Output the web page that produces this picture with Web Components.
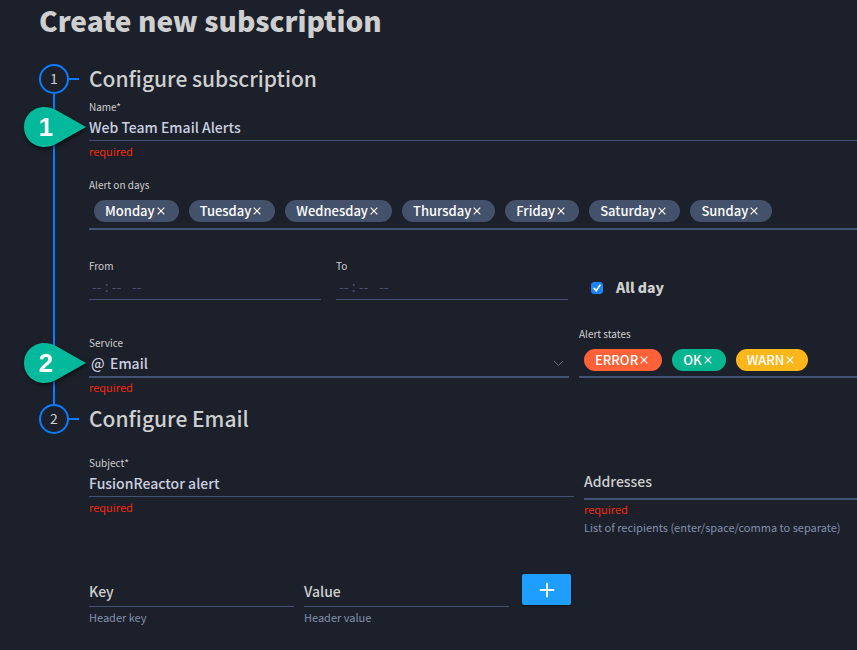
<!DOCTYPE html>
<html lang="en">
<head>
<meta charset="utf-8">
<meta name="viewport" content="width=device-width, initial-scale=1">
<title>Create new subscription</title>
<style>
body {
  margin: 0;
  background: #1c202a;
  color: #cfcfcf;
  font-family: "Noto Sans CJK SC", "Noto Sans", sans-serif;
}
</style>
</head>
<body>
<subscription-page></subscription-page>

<script>
const define = (name, html, setup) => {
  const template = document.createElement('template');
  template.innerHTML = html;
  customElements.define(name, class extends HTMLElement {
    connectedCallback() {
      if (this.shadowRoot) return;
      const root = this.attachShadow({ mode: 'open' });
      root.append(template.content.cloneNode(true));
      if (setup) setup(this, root);
    }
  });
};

/* Numbered pin that points at a field */
define('callout-pin', `
<style>
  :host { position: absolute; left: -69px; top: 5px; display: block; filter: drop-shadow(1px 2px 2px rgba(0,0,0,.6)); }
  svg { display: block; width: 70px; height: 48px; }
  text { font: bold 26px "Liberation Sans", Arial, sans-serif; fill: #fff; text-anchor: middle; }
</style>
<svg viewBox="0 0 70 48" role="img">
  <path fill="#02b99c" d="M24 4C12.900 4 4 13 4 24S12.900 44 24 44C28.500 44 32.500 42.800 36 41L66 24L36 7C32.500 5.200 28.500 4 24 4Z"/>
  <text x="26" y="33"></text>
</svg>`, (host, root) => {
  root.querySelector('text').textContent = host.getAttribute('number');
});

/* Step with number, rail and content */
define('wizard-step', `
<style>
  :host { display: grid; grid-template-columns: 30px 10px 1fr; }
  .num { box-sizing: border-box; width: 30px; height: 30px; border: 2px solid #0a7cff; border-radius: 50%;
         font-size: 14px; line-height: 24px; text-align: center; }
  .dash { align-self: center; height: 2px; background: #0a7cff; }
  h2 { margin: 0; padding-left: 10px; font-size: 21px; line-height: 28px; font-weight: 500; }
  .rail { justify-self: center; width: 2px; }
  :host([linked]) .rail { background: #0a7cff; }
  .body { grid-column: 3; padding-left: 10px; min-width: 0; }
</style>
<div class="num"></div><div class="dash"></div><h2></h2>
<div class="rail"></div><div class="body"><slot></slot></div>`, (host, root) => {
  root.querySelector('.num').textContent = host.getAttribute('number');
  root.querySelector('h2').textContent = host.getAttribute('heading');
});

const fieldStyle = `
  :host { display: block; position: relative; min-width: 0; }
  label, .label { display: block; font-size: 10px; line-height: 18px; font-weight: 400; }
  .control { display: grid; align-items: center; box-sizing: content-box; height: calc(var(--control, 24px) - 2px);
             padding-bottom: 2px; border-bottom: var(--rule, 1px) solid #435373; }
  .control > * { grid-area: 1 / 1; min-width: 0; }
  input, select { box-sizing: border-box; width: 100%; height: 22px; margin: 0; padding: 0; border: 0; outline: 0; background: none;
          color: #cbd0e0; font: 500 14px/22px "Noto Sans CJK SC", sans-serif; appearance: none; }
  .control label { font-size: 14px; line-height: 22px; font-weight: 500; }
  .hint { min-height: 20px; font-size: 11px; line-height: 18px; color: #8290b0; padding-top: calc(2px - var(--rule, 1px)); box-sizing: border-box; }
  .error { color: #f02a08; }
  .error + .hint { padding-top: 0; }
  .error:has(+ .hint) { min-height: 18px; }
`;

const addHints = (host, root) => {
  if (host.hasAttribute('error')) {
    const p = document.createElement('div');
    p.className = 'hint error';
    p.textContent = host.getAttribute('error');
    root.append(p);
  }
  if (host.hasAttribute('hint') || !host.hasAttribute('error')) {
    const p = document.createElement('div');
    p.className = 'hint';
    p.textContent = host.getAttribute('hint') || '';
    root.append(p);
  }
};

/* Text or time box; "inside" puts the label on the line itself */
define('text-field', `
<style>${fieldStyle}
  input[type=time] { color: #47536d; padding-left: 2px; font-weight: 400; }
  input::-webkit-calendar-picker-indicator { display: none; }
  input::-webkit-datetime-edit-text { padding: 0 2px; }
  input::-webkit-datetime-edit-ampm-field { margin-left: 3px; }
</style>
<label for="box"></label>
<div class="control"><input id="box" type="text"></div>
<slot></slot>`, (host, root) => {
  const label = root.querySelector('label');
  const input = root.querySelector('input');
  label.textContent = host.getAttribute('label');
  if (host.hasAttribute('type')) input.type = host.getAttribute('type');
  if (host.hasAttribute('value')) input.value = host.getAttribute('value');
  if (host.hasAttribute('inside')) root.querySelector('.control').prepend(label);
  addHints(host, root);
});

define('service-select', `
<style>${fieldStyle}
  .at { padding-left: 2px; font-size: 14px; line-height: 22px; font-weight: 500; color: #cbd0e0; }
  select { padding-left: 21px; }
  svg { justify-self: end; margin-right: 5px; width: 11px; height: 7px; }
</style>
<label for="box">Service</label>
<div class="control">
  <span class="at" aria-hidden="true">@</span>
  <svg viewBox="0 0 11 7" fill="none" stroke="#686d78" stroke-width="1"><path d="M1 1L5.500 5.500L10 1"/></svg>
  <select id="box"><option>Email</option></select>
</div>
<slot></slot>`, addHints);

define('tag-chip', `
<style>
  :host { display: flex; align-items: center; height: 22px; padding: 0 12px 0 11px; border-radius: 11px;
          background: var(--chip, #44516b); color: #fff; font-size: 13px; line-height: 22px; font-weight: 500; white-space: nowrap; }
  button { display: flex; margin: 0; padding: 2px; border: 0; background: none; color: inherit; }
  svg { width: 8px; height: 8px; }
</style>
<span><slot></slot></span><button type="button" aria-label="Remove"><svg viewBox="0 0 8 8" fill="none" stroke="currentColor" stroke-width="1.200"><path d="M.700.700L7.300 7.300M7.300.700L.700 7.300"/></svg></button>`);

define('chip-field', `
<style>${fieldStyle}
  .control { display: flex; gap: 10px; height: var(--control); padding: 0 0 0 5px; }
</style>
<div class="label" id="name"></div>
<div class="control" role="group" aria-labelledby="name"><slot></slot></div>`, (host, root) => {
  root.querySelector('#name').textContent = host.getAttribute('label');
  addHints(host, root);
});

define('check-option', `
<style>
  :host { display: flex; align-items: center; }
  .box { display: grid; }
  .box > * { grid-area: 1 / 1; width: 12px; height: 12px; margin: 0; }
  input { appearance: none; border-radius: 3px; border: 1px solid #435373; box-sizing: border-box; }
  input:checked { background: #1a85ff; border-color: #1a85ff; }
  svg { pointer-events: none; }
  label { padding: 0 0 2px 13px; font-size: 14px; line-height: 18px; font-weight: 900; }
</style>
<span class="box"><input id="c" type="checkbox" checked>
<svg viewBox="0 0 12 12" fill="none" stroke="#fff" stroke-width="1.600" stroke-linecap="round" stroke-linejoin="round"><path d="M3 6.400L5.200 8.800L9 3.200"/></svg></span>
<label for="c"><slot></slot></label>`);

define('add-button', `
<style>
  :host { display: block; }
  button { display: grid; place-items: center; width: 49px; height: 31px; padding: 0; border: 0; border-radius: 2px;
           background: #1e9fff; box-shadow: 0 1px 2px rgba(0,0,0,.5); }
  svg { width: 16px; height: 16px; }
</style>
<button type="button" aria-label="Add header"><svg viewBox="0 0 16 16" stroke="#fff" stroke-width="1.800"><path d="M8 .800V15.200M.800 8H15.200"/></svg></button>`);

define('subscription-page', `
<style>
  :host { display: block; }
  h1 { margin: 0; padding-left: 39px; font-size: 28px; line-height: 40px; font-weight: 900; }
  form { padding: 24px 0 0 39px; }
  .row { display: grid; align-items: start; }
  .name { margin-top: 4px; }
  .days { margin-top: 15px; --control: 34px; --rule: 2px; }
  .times { margin-top: 7px; grid-template-columns: 232fr 232fr 274fr; gap: 15px; }
  .times check-option { padding: 21px 0 0 8px; }
  .service { margin: 5px 0 6px; grid-template-columns: 480fr 278fr; gap: 10px; align-items: end; --rule: 2px; }
  .states { --control: 33px; }
  .mail { margin-top: 20px; grid-template-columns: 485fr 273fr; gap: 10px; }
  .to { --control: 32px; --rule: 2px; margin-top: 12px; }
  .header { margin-top: 36px; grid-template-columns: 205fr 205fr 338fr; gap: 10px; --control: 28px; }
  .header text-field { margin-top: 4px; }
  .header add-button { padding-left: 3px; }
  .error { --chip: #ff6138; } .ok { --chip: #04b58f; } .warn { --chip: #ffb61a; }
</style>
<h1>Create new subscription</h1>
<form>
  <wizard-step number="1" heading="Configure subscription" linked>
    <text-field class="name" label="Name*" value="Web Team Email Alerts" error="required"><callout-pin number="1"></callout-pin></text-field>
    <chip-field class="days" label="Alert on days">
      <tag-chip>Monday</tag-chip><tag-chip>Tuesday</tag-chip><tag-chip>Wednesday</tag-chip><tag-chip>Thursday</tag-chip><tag-chip>Friday</tag-chip><tag-chip>Saturday</tag-chip><tag-chip>Sunday</tag-chip>
    </chip-field>
    <div class="row times">
      <text-field label="From" type="time"></text-field>
      <text-field label="To" type="time"></text-field>
      <check-option>All day</check-option>
    </div>
    <div class="row service">
      <service-select error="required"><callout-pin number="2"></callout-pin></service-select>
      <chip-field class="states" label="Alert states">
        <tag-chip class="error">ERROR</tag-chip><tag-chip class="ok">OK</tag-chip><tag-chip class="warn">WARN</tag-chip>
      </chip-field>
    </div>
  </wizard-step>
  <wizard-step number="2" heading="Configure Email">
    <div class="row mail">
      <text-field label="Subject*" value="FusionReactor alert" error="required"></text-field>
      <text-field class="to" label="Addresses" inside error="required" hint="List of recipients (enter/space/comma to separate)"></text-field>
    </div>
    <div class="row header">
      <text-field label="Key" inside hint="Header key"></text-field>
      <text-field label="Value" inside hint="Header value"></text-field>
      <add-button></add-button>
    </div>
  </wizard-step>
</form>`);
</script>
</body>
</html>
